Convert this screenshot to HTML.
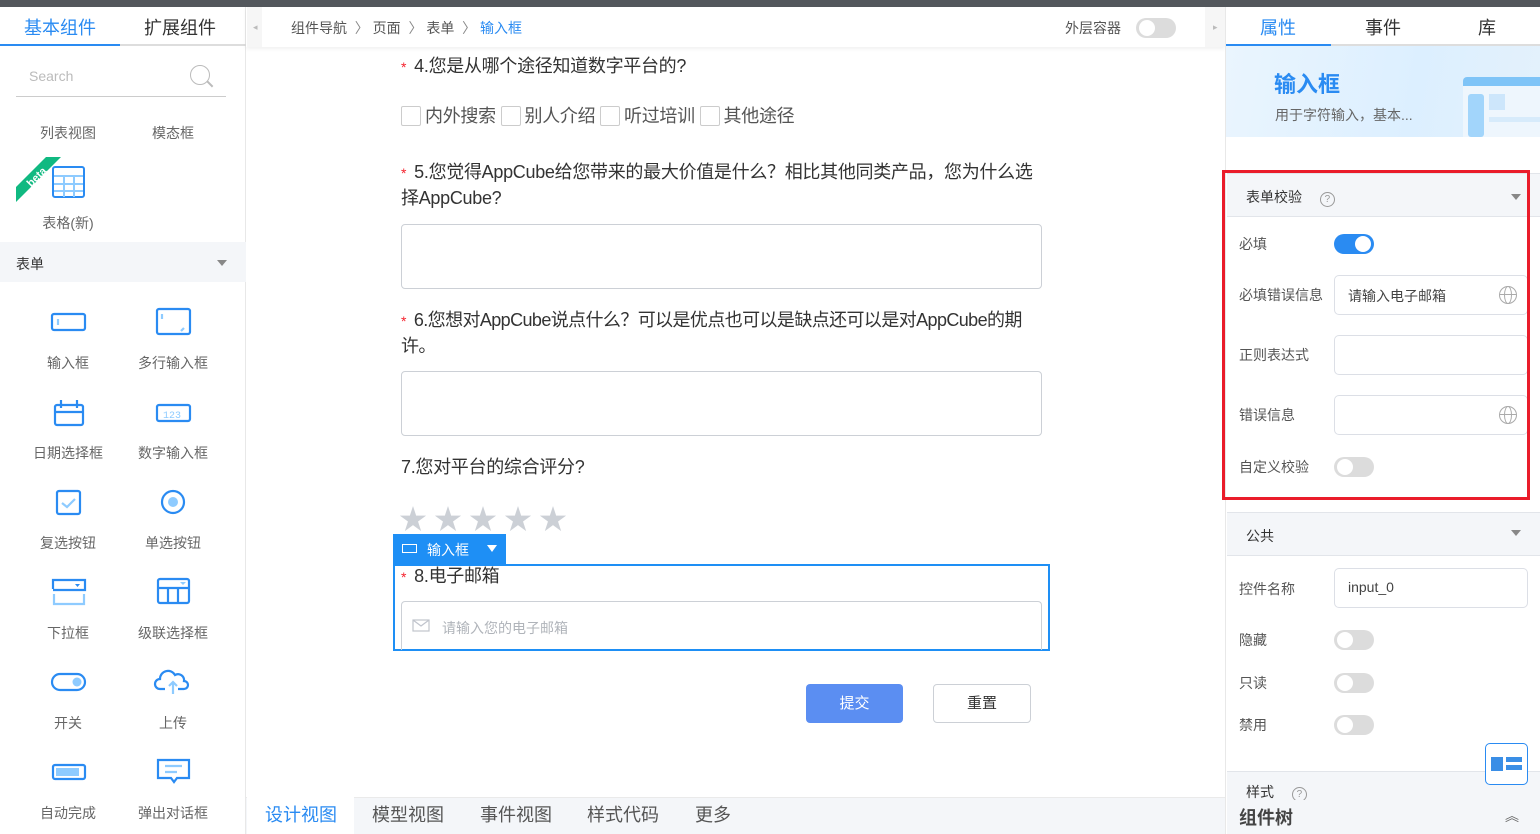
<!DOCTYPE html>
<html><head><meta charset="utf-8"><style>
*{box-sizing:border-box;margin:0;padding:0}
body{width:1540px;height:834px;overflow:hidden;position:relative;background:#fff;font-family:"Liberation Sans","Noto Sans CJK SC",sans-serif;color:#333}
.a{position:absolute}
.lbl{position:absolute;font-size:14px;color:#666;text-align:center;width:100px}
.q{position:absolute;left:401px;font-size:18px;color:#333;line-height:25px;width:700px;letter-spacing:-0.3px}
.q .s{color:#f5222d;font-size:14px;margin-right:8px}
.ta{position:absolute;left:401px;width:641px;height:65px;border:1px solid #ccd0d6;border-radius:4px}
.cb{display:inline-block;width:20px;height:20px;border:1px solid #ccc;border-radius:2px;vertical-align:-4px;margin-right:4px}
.tg{position:absolute;width:40px;height:20px;border-radius:10px;background:#dcdcdc}
.tg:after{content:"";position:absolute;left:3px;top:2px;width:16px;height:16px;border-radius:50%;background:#fff}
.tg.on{background:#2a8bf2}.tg.on:after{left:21px}
.pl{position:absolute;left:1239px;font-size:14px;color:#555}
.in{position:absolute;left:1334px;width:194px;height:40px;border:1px solid #dcdfe6;border-radius:5px;font-size:14px;color:#444;padding:10px 13px}
.gl{position:absolute;right:10px;top:10px;width:18px;height:18px;border:1.5px solid #aaa;border-radius:50%}
.gl:before{content:"";position:absolute;left:4px;top:-1px;width:6px;height:16px;border:1px solid #aaa;border-radius:50%}
.gl:after{content:"";position:absolute;left:0;top:7px;width:16px;height:1px;background:#aaa}
.sec{position:absolute;left:1227px;width:313px;height:44px;background:#f4f6f9;border-top:1px solid #e2e5ea;border-bottom:1px solid #e2e5ea;font-size:14px;padding:13px 19px;color:#333}
.tri{position:absolute;width:0;height:0;border-left:5px solid transparent;border-right:5px solid transparent;border-top:6px solid #888}
</style></head><body>
<div class="a" style="left:0;top:0;width:1540px;height:7px;background:#53575c"></div>

<!-- LEFT -->
<div class="a" style="left:0;top:7px;width:246px;height:827px;background:#fff;border-right:1px solid #e8e8e8"></div>
<div class="a" style="left:0;top:14px;width:120px;text-align:center;font-size:18px;color:#2a8bf2">基本组件</div>
<div class="a" style="left:120px;top:14px;width:120px;text-align:center;font-size:18px;color:#333">扩展组件</div>
<div class="a" style="left:0;top:44px;width:246px;height:2px;background:#ddd"></div>
<div class="a" style="left:0;top:44px;width:120px;height:2px;background:#2a8bf2"></div>
<div class="a" style="left:29px;top:68px;font-size:14px;color:#bbb">Search</div>
<div class="a" style="left:190px;top:65px;width:20px;height:20px;border:1.5px solid #bbb;border-radius:50%"></div>
<div class="a" style="left:206px;top:83px;width:8px;height:1.5px;background:#bbb;transform:rotate(45deg)"></div>
<div class="a" style="left:16px;top:96px;width:210px;height:1px;background:#ccc"></div>
<div class="lbl" style="left:18px;top:123px">列表视图</div>
<div class="lbl" style="left:123px;top:123px">模态框</div>
<svg class="a" style="left:16px;top:157px" width="46" height="46"><polygon points="0,30 30,0 45,0 0,45" fill="#10b981"/><text x="10" y="26" fill="#fff" font-size="11" font-weight="bold" transform="rotate(-45 18 22)" font-family="Liberation Sans">beta</text></svg>
<svg class="a" style="left:52px;top:166px" width="33" height="32"><rect x="1" y="1" width="31" height="30" rx="2" fill="none" stroke="#2a8bf2" stroke-width="2"/><path d="M2 10H31M2 18H31M2 25H31M12 10V31M22 10V31" stroke="#8ecbff" stroke-width="2"/></svg>
<div class="lbl" style="left:18px;top:213px">表格(新)</div>
<div class="a" style="left:0;top:242px;width:246px;height:40px;background:#f4f6f9"></div>
<div class="a" style="left:16px;top:254px;font-size:14px;color:#333">表单</div>
<div class="tri" style="left:217px;top:260px"></div>

<!-- icons -->
<svg class="a" style="left:0;top:290px" width="246" height="510" fill="none" stroke="#2a8bf2" stroke-width="2.2">
<rect x="52" y="24" width="33" height="16" rx="2"/><path d="M58 29v6" stroke="#8ecbff"/>
<rect x="157" y="19" width="33" height="25" rx="2"/><path d="M162 24v5M184 38l-3 3" stroke="#8ecbff"/>
<g transform="translate(0,5)"><rect x="55" y="110" width="28" height="20" rx="2"/><path d="M55 117H83M61 105v8M77 105v8"/>
<rect x="157" y="110" width="33" height="16" rx="2"/><text x="163" y="123" font-size="10" fill="#8ecbff" stroke="none" font-family="Liberation Mono">123</text></g>
<g transform="translate(0,8)"><rect x="57" y="193" width="23" height="23" rx="2"/><path d="M62 205l5 4 8-8" stroke="#8ecbff"/>
<circle cx="173" cy="204" r="11"/><circle cx="173" cy="204" r="5" fill="#8ecbff" stroke="none"/></g>
<g transform="translate(0,11)"><path d="M53 288V279h32v10H53" /><path d="M54 293v10h30v-10" stroke="#8ecbff"/><path d="M75 283h5l-2.5 3z" fill="#2a8bf2" stroke="none"/>
<rect x="158" y="278" width="31" height="24" rx="2"/><path d="M158 287H189M168 287V302M178 287V302"/><path d="M180 281h6l-3 3z" fill="#8ecbff" stroke="none"/></g>
<rect x="52" y="384" width="33" height="16" rx="8"/><circle cx="77" cy="392" r="4.5" fill="#8ecbff" stroke="none"/>
<g transform="translate(0,2)"><path d="M165 397h-5a5 5 0 0 1 0-10a8 8 0 0 1 15-4a6 6 0 0 1 9 6a4 4 0 0 1 0 8h-6"/><path d="M173 402v-11M169 394l4-4 4 4" stroke="#8ecbff"/></g>
<rect x="53" y="475" width="32" height="14" rx="2"/><rect x="56" y="478" width="23" height="8" fill="#8ecbff" stroke="none"/>
<path d="M158 470h31v18h-12l-3 4-3-4h-13z"/><path d="M165 476h17M165 482h12" stroke="#8ecbff"/>
</svg>
<div class="lbl" style="left:18px;top:353px">输入框</div><div class="lbl" style="left:123px;top:353px">多行输入框</div>
<div class="lbl" style="left:18px;top:443px">日期选择框</div><div class="lbl" style="left:123px;top:443px">数字输入框</div>
<div class="lbl" style="left:18px;top:533px">复选按钮</div><div class="lbl" style="left:123px;top:533px">单选按钮</div>
<div class="lbl" style="left:18px;top:623px">下拉框</div><div class="lbl" style="left:123px;top:623px">级联选择框</div>
<div class="lbl" style="left:18px;top:713px">开关</div><div class="lbl" style="left:123px;top:713px">上传</div>
<div class="lbl" style="left:18px;top:803px">自动完成</div><div class="lbl" style="left:123px;top:803px">弹出对话框</div>

<!-- CENTER header -->
<div class="a" style="left:246px;top:7px;width:979px;height:40px;background:#fff;box-shadow:0 2px 4px rgba(0,0,0,.06)"></div>
<div class="a" style="left:247px;top:7px;width:15px;height:40px;background:#f6f6f6"></div>
<div class="a" style="left:1205px;top:7px;width:20px;height:40px;background:#f6f6f6"></div>
<div class="a" style="left:253px;top:22px;font-size:9px;color:#bbb">◂</div>
<div class="a" style="left:1213px;top:22px;font-size:9px;color:#bbb">▸</div>
<div class="a" style="left:291px;top:18px;font-size:14px;color:#555">组件导航 &nbsp;<span style="color:#888">〉</span> 页面 &nbsp;<span style="color:#888">〉</span> 表单 &nbsp;<span style="color:#888">〉</span> <span style="color:#2a8bf2">输入框</span></div>
<div class="a" style="left:1065px;top:18px;font-size:14px;color:#555">外层容器</div>
<div class="tg" style="left:1136px;top:18px"></div>

<!-- form -->
<div class="q" style="top:54px"><span class="s">*</span>4.您是从哪个途径知道数字平台的?</div>
<div class="a" style="left:401px;top:102px;font-size:18px;color:#555;letter-spacing:-0.3px"><span class="cb"></span>内外搜索 <span class="cb"></span>别人介绍 <span class="cb"></span>听过培训 <span class="cb"></span>其他途径</div>
<div class="q" style="top:160px"><span class="s">*</span>5.您觉得AppCube给您带来的最大价值是什么？相比其他同类产品，您为什么选<br>择AppCube?</div>
<div class="ta" style="top:224px"></div>
<div class="q" style="top:308px;letter-spacing:-0.6px"><span class="s">*</span>6.您想对AppCube说点什么？可以是优点也可以是缺点还可以是对AppCube的期<br>许。</div>
<div class="ta" style="top:371px"></div>
<div class="q" style="top:455px">7.您对平台的综合评分?</div>
<div class="a" style="left:399px;top:498px;font-size:28px;color:#ccd0d6;letter-spacing:7px">★★★★★</div>
<div class="a" style="left:393px;top:534px;width:113px;height:30px;background:#1e8ff5;color:#fff;font-size:14px;padding:6px 0 0 34px">输入框</div>
<div class="a" style="left:402px;top:544px;width:15px;height:9px;border:1.5px solid #fff"></div>
<div class="a" style="left:487px;top:545px;border-left:5px solid transparent;border-right:5px solid transparent;border-top:7px solid #fff"></div>
<div class="a" style="left:393px;top:564px;width:657px;height:87px;border:2px solid #1e8ff5"></div>
<div class="q" style="top:564px"><span class="s">*</span>8.电子邮箱</div>
<div class="a" style="left:401px;top:601px;width:641px;height:49px;border:1px solid #ccd0d6;border-bottom:none;border-radius:4px 4px 0 0"></div>
<svg class="a" style="left:412px;top:619px" width="18" height="14" fill="none" stroke="#c0c4cc" stroke-width="1.2"><rect x="1" y="1" width="16" height="11"/><path d="M1 1l8 6 8-6"/></svg>
<div class="a" style="left:442px;top:618px;font-size:14px;color:#b0b4ba">请输入您的电子邮箱</div>
<div class="a" style="left:806px;top:684px;width:97px;height:39px;background:#5b8ef2;border-radius:4px;color:#fff;font-size:15px;text-align:center;line-height:39px">提交</div>
<div class="a" style="left:933px;top:684px;width:98px;height:39px;border:1px solid #ccd0d6;border-radius:4px;color:#333;font-size:15px;text-align:center;line-height:37px">重置</div>

<!-- bottom tabs -->
<div class="a" style="left:246px;top:797px;width:979px;height:37px;background:#f4f6f9;border-top:1px solid #eaeaea"></div>
<div class="a" style="left:247px;top:797px;width:107px;height:37px;background:#fff"></div>
<div class="a" style="left:265px;top:801px;font-size:18px;color:#2a8bf2">设计视图</div>
<div class="a" style="left:372px;top:801px;font-size:18px;color:#555">模型视图</div>
<div class="a" style="left:480px;top:801px;font-size:18px;color:#555">事件视图</div>
<div class="a" style="left:587px;top:801px;font-size:18px;color:#555">样式代码</div>
<div class="a" style="left:695px;top:801px;font-size:18px;color:#555">更多</div>

<!-- RIGHT -->
<div class="a" style="left:1225px;top:7px;width:315px;height:827px;background:#fff;border-left:1px solid #e8e8e8"></div>
<div class="a" style="left:1228px;top:14px;width:100px;text-align:center;font-size:18px;color:#2a8bf2">属性</div>
<div class="a" style="left:1333px;top:14px;width:100px;text-align:center;font-size:18px;color:#333">事件</div>
<div class="a" style="left:1437px;top:14px;width:100px;text-align:center;font-size:18px;color:#333">库</div>
<div class="a" style="left:1226px;top:44px;width:314px;height:2px;background:#ddd"></div>
<div class="a" style="left:1226px;top:44px;width:105px;height:2px;background:#2a8bf2"></div>
<div class="a" style="left:1226px;top:46px;width:314px;height:91px;background:linear-gradient(100deg,#eaf5fe,#dcefff 60%,#e4f1fb)"></div>
<div class="a" style="left:1463px;top:77px;width:77px;height:60px;background:#eef6fd;border-radius:4px 0 0 0"></div>
<div class="a" style="left:1463px;top:77px;width:77px;height:9px;background:#7fc4f7;border-radius:4px 0 0 0"></div>
<div class="a" style="left:1468px;top:94px;width:16px;height:43px;background:#a2d5fb;border-radius:3px"></div>
<div class="a" style="left:1489px;top:94px;width:16px;height:16px;background:#cde6fb"></div>
<div class="a" style="left:1489px;top:117px;width:51px;height:5px;background:#d7ebfb"></div>
<div class="a" style="left:1274px;top:67px;font-size:22px;font-weight:bold;color:#2a8bf2">输入框</div>
<div class="a" style="left:1275px;top:105px;font-size:14px;color:#666">用于字符输入，基本...</div>

<div class="sec" style="top:173px">表单校验 <span style="display:inline-block;width:15px;height:15px;border:1px solid #999;border-radius:50%;font-size:10px;text-align:center;line-height:13px;color:#999;margin-left:14px">?</span></div>
<div class="tri" style="left:1511px;top:194px"></div>
<div class="pl" style="top:234px">必填</div><div class="tg on" style="left:1334px;top:234px"></div>
<div class="pl" style="top:285px">必填错误信息</div><div class="in" style="top:275px">请输入电子邮箱<div class="gl"></div></div>
<div class="pl" style="top:345px">正则表达式</div><div class="in" style="top:335px"></div>
<div class="pl" style="top:405px">错误信息</div><div class="in" style="top:395px"><div class="gl"></div></div>
<div class="pl" style="top:457px">自定义校验</div><div class="tg" style="left:1334px;top:457px"></div>
<div class="a" style="left:1222px;top:170px;width:308px;height:330px;border:3px solid #ea1c2a"></div>

<div class="sec" style="top:512px">公共</div>
<div class="tri" style="left:1511px;top:530px"></div>
<div class="pl" style="top:579px">控件名称</div><div class="in" style="top:568px">input_0</div>
<div class="pl" style="top:630px">隐藏</div><div class="tg" style="left:1334px;top:630px"></div>
<div class="pl" style="top:673px">只读</div><div class="tg" style="left:1334px;top:673px"></div>
<div class="pl" style="top:715px">禁用</div><div class="tg" style="left:1334px;top:715px"></div>
<div class="sec" style="top:771px;height:30px;padding-top:10px">样式 <span style="display:inline-block;width:15px;height:15px;border:1px solid #999;border-radius:50%;font-size:10px;text-align:center;line-height:13px;color:#999;margin-left:14px">?</span></div>
<div class="a" style="left:1227px;top:800px;width:313px;height:34px;background:#f4f6f9"></div>
<div class="a" style="left:1239px;top:804px;font-size:18px;font-weight:bold;color:#444">组件树</div>
<div class="a" style="left:1505px;top:806px;font-size:14px;color:#666">︽</div>
<div class="a" style="left:1485px;top:743px;width:43px;height:42px;border:1px solid #2a8bf2;border-radius:5px;background:#fff"></div>
<div class="a" style="left:1491px;top:757px;width:12px;height:14px;background:#3a8ee6"></div>
<div class="a" style="left:1506px;top:757px;width:16px;height:5px;background:#3a8ee6"></div>
<div class="a" style="left:1506px;top:765px;width:16px;height:5px;background:#3a8ee6"></div>
</body></html>
